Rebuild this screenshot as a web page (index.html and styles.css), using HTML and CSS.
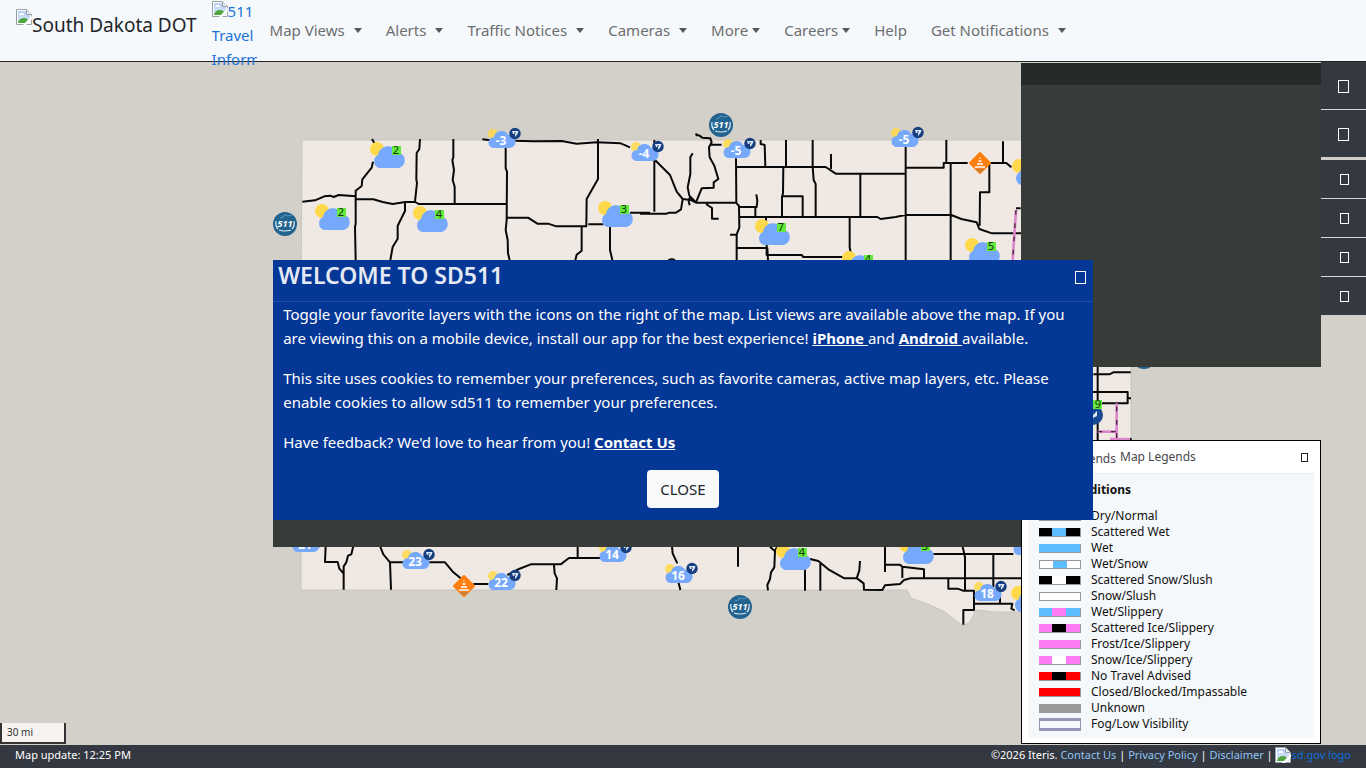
FILE: index.html
```html
<!DOCTYPE html>
<html lang="en">
<head>
<meta charset="utf-8">
<title>SD511</title>
<meta name="viewport" content="width=device-width, initial-scale=1">
<link rel="stylesheet" href="styles.css">
</head>
<body>
<svg class="defs" aria-hidden="true">
  <defs>
    <linearGradient id="pic-sky" x1="0" y1="0" x2="0" y2="1"><stop offset="0" stop-color="#b5cdf5"/><stop offset="1" stop-color="#dce8fb"/></linearGradient>
    <symbol id="broken" viewBox="0 0 16 16">
      <path d="M.5.5h10l5 5v10H.5z" fill="#fff" stroke="#9aa0a8"/>
      <path d="M2 2h8v4h4v8H2z" fill="url(#pic-sky)"/>
      <path d="M3 6q0-2 2-2 2-1 3 1 1 1-1 1z" fill="#fff"/>
      <path d="M2 14q1-5 6-5 3 0 4 2l-3 3z" fill="#4ea63b"/>
      <path d="M16 7v3l-6 6H7z" fill="#fff"/>
      <path d="M10.500.5v5h5" fill="#e8ebef" stroke="#9aa0a8"/>
    </symbol>
    <g id="cloud">
      <circle cx="7" cy="6" r="7" fill="#ffd94a"/>
      <path d="M9 25a7 7 0 0 1-1-13 10 10 0 0 1 19-3 8 8 0 0 1 3 1 8 8 0 0 1-1 15z" fill="#76a9fb"/>
    </g>
    <g id="station">
      <circle cx="6" cy="6" r="5" fill="#ffd94a" opacity=".85"/>
      <path d="M7 20a5.500 5.500 0 0 1 0-11 7.500 7.500 0 0 1 14-2 6.500 6.500 0 0 1 2 13z" fill="#76a9fb"/>
      <circle cx="28" cy="5.500" r="5.700" fill="#173f80"/>
      <path d="M25 3h6.500l-1 3-2.500 3v-3h-2z" fill="#dbe6f7"/>
      <path d="M27 5h2" stroke="#173f80"/>
    </g>
    <g id="camera511">
      <circle r="12" fill="#23638f"/>
      <path d="M-9-3a9.500 9.500 0 0 0 2 8M9-3a9.500 9.500 0 0 1-2 8M-6 6q6 2 12 0" fill="none" stroke="#dcebf4" stroke-width="1.200"/>
      <path d="M-5-6l3-1 2-2 3 1 4-1" fill="none" stroke="#4f91bd" stroke-width="1.200"/>
      <text class="shield-text" y="3" text-anchor="middle">511</text>
    </g>
    <g id="work">
      <path d="M0-10 10 0 0 10-10 0z" fill="#ff7f0e" stroke="#ff7f0e" stroke-width="2" stroke-linejoin="round"/>
      <path d="M-5 6h10L0 10z" fill="#c98136"/>
      <path d="M-5 4h10M-3 1h6M-1.500-2h3M-.5-5h1" stroke="#fff" stroke-width="1.700"/>
    </g>
  </defs>
</svg>

<header class="navbar">
  <a class="brand" href="#"><svg class="broken"><use href="#broken"/></svg>South Dakota DOT</a>
  <a class="logo511" href="#"><svg class="broken"><use href="#broken"/></svg>511<br>Travel<br>Information</a>
  <nav class="menu">
    <a class="drop spaced" href="#">Map Views</a>
    <a class="drop spaced" href="#">Alerts</a>
    <a class="drop spaced" href="#">Traffic Notices</a>
    <a class="drop spaced" href="#">Cameras</a>
    <a class="drop" href="#">More</a>
    <a class="drop" href="#">Careers</a>
    <a href="#">Help</a>
    <a class="drop spaced" href="#">Get Notifications</a>
  </nav>
</header>

<main class="map-area">
  <svg class="map" viewBox="0 62 1366 683" preserveAspectRatio="xMidYMid slice" role="img" aria-label="Road conditions map">
    <path class="land" d="M302 140H1131V612H1021L995 612 976 610 970 622 963 626 945 612 930 605 911 598 907 590H301V300z"/>
    <g class="roads" transform="translate(270 110) scale(.33333)">
      <path d="M306 87l7 12M309 155l-4 18-28 35-2 20-18 14v100l-2 8 2 100M97 275l38-4 28-12 18-2 10 4 15-6 52 4M258 268h52l28 8 30 6 38-6h30l10 6h262M450 87l-2 30-8 12-1 80 2 10-6 55M550 87v55l-3 8 5 30-4 30 6 20v50M637 88l25 3M730 92l60 2 85-1 45 8 60-4 72 3 28 12M707 110v65l4 10-1 145-3 30 6 30 1 40 5 20M984 87v120l-34 60-1 82h-90l-25-8h-32l-28-18h-65M935 350v72l-15 12-4 16M955 343h45M1020 350v70l7 30M1080 308h60M405 275v28l-15 30-7 15v38l-15 25-7 39"/>
    </g>
    <g class="roads" transform="translate(640 110) scale(.33333)">
      <path d="M43 90v215M45 150l45 45 20 50 18 22 25 3 15 8M128 268l-5 30-15 10h-20l-8 3H0M158 130l-7 12v50l-8 40 5 25 20 20 17-42 36-2v-16l14-10-12-40-14-25-2-30 8-15-4-12-24-2-10-7h-7l-2-6M150 262l-4 12 3 12M213 104h32M168 278h120l9 10 1 65-8 20v77M198 282l18 12v32h20M288 145l1 132M290 171h267l30 20h210M362 90v12l12 3 2 64M438 90v80M518 90v80l3 40 6 12v96M430 172l-1 78-3 10v60M428 259h60v60M349 253l3 20-2 18h-50M346 292v28M300 321h412l10 6 45-6 32-7M573 132v45M661 193v127M797 110v340M800 173h111v-14h72M919 90v68M1089 94v64l-40 1h50l15 13M932 160v290M800 315h134l30 12 46 10 8 20 38 13h90M1048 160v87h-28l-1 100M1142 295h-14M378 320v20M270 374h20M292 414h90l2 36M380 405v30h105l5 6h120M629 322v90l4 20M85 451q10-6 20 0"/>
      <path class="ice" d="M1128 300l-6 90-4 60"/><path class="ice-dash" d="M1128 300l-6 90-4 60"/>
    </g>
    <g class="roads" transform="translate(1010 360) scale(.33333)">
      <path d="M263 0v240M250 43h48l12-6h52M245 96h108v34h-80M353 115h10M300 237h65"/>
      <path class="ice" d="M320 130v110M263 215h57M300 237h60"/><path class="ice-dash" d="M320 140v100M263 215h57"/>
    </g>
    <g class="roads" transform="translate(270 510) scale(.33333)">
      <path d="M120 110h28M167 108l-2 48h38l5 20 13 15v48M250 108l-6 25-10 4-5 20-8 12v68M330 108l10 25 20 24 3 82M360 157h45M475 157h50l25 30 25 20M610 222h45M712 195l35-18 35-14h90l25-19h100M923 108v36M852 165l2 25 7 15-2 35"/>
    </g>
    <g class="roads" transform="translate(640 530) scale(.33333)">
      <path d="M96 50l2 20 14 30M115 155l6 25M294 50v60M390 50l15 14-2 48-10 15-3 20-8 18 2 16M411 50l-6 14M495 115v67M510 87l25 6 30 25 48 27h38l20 15 1 19 55 1 8-14 45-4 12-12 20-5h370M541 100v82M660 93l-2 28-8 24M735 50v76M735 104h45l7 6 65 8v26M787 110v34M880 72h240M968 50l7 32v100M1060 72v100M925 146v30h28l16 6h33v58h-32v44M1002 221h115l-3 15 10 5M1080 190v28"/>
    </g>

    <g class="temps">
      <g transform="translate(370 143)"><use href="#cloud"/><rect x="22" y="3" width="9" height="9"/><text x="26" y="11">2</text></g>
      <g transform="translate(315 205)"><use href="#cloud"/><rect x="22" y="3" width="9" height="9"/><text x="26" y="11">2</text></g>
      <g transform="translate(413 207)"><use href="#cloud"/><rect x="22" y="3" width="9" height="9"/><text x="26" y="11">4</text></g>
      <g transform="translate(598 202)"><use href="#cloud"/><rect x="22" y="3" width="9" height="9"/><text x="26" y="11">3</text></g>
      <g transform="translate(755 220)"><use href="#cloud"/><rect x="22" y="3" width="9" height="9"/><text x="26" y="11">7</text></g>
      <g transform="translate(965 239)"><use href="#cloud"/><rect x="22" y="3" width="9" height="9"/><text x="26" y="11">5</text></g>
      <g transform="translate(842 252)"><use href="#cloud"/><rect x="22" y="3" width="9" height="9"/><text x="26" y="11">4</text></g>
      <g transform="translate(776 545)"><use href="#cloud"/><rect x="22" y="3" width="9" height="9"/><text x="26" y="11">4</text></g>
      <g transform="translate(899 539)"><use href="#cloud"/><rect x="22" y="3" width="9" height="9"/><text x="26" y="11">3</text></g>
      <use href="#cloud" x="1012" y="160"/>
      <use href="#cloud" x="1011" y="587"/>
      <circle cx="1093" cy="415" r="10" fill="#174a92"/><path d="M1090 418l7-7v5l-4 2z" fill="#dbe6f7"/>
      <rect x="1093" y="400" width="9" height="9"/><text x="1098" y="408">9</text>
    </g>
    <g class="stations">
      <g transform="translate(487 128)"><use href="#station"/><text x="14" y="17">-3</text></g>
      <g transform="translate(630 141)"><use href="#station"/><text x="14" y="17">-4</text></g>
      <g transform="translate(722 138)"><use href="#station"/><text x="14" y="17">-5</text></g>
      <g transform="translate(890 127)"><use href="#station"/><text x="14" y="17">-5</text></g>
      <g transform="translate(401 549)"><use href="#station"/><text x="14" y="17">23</text></g>
      <g transform="translate(487 570)"><use href="#station"/><text x="14" y="17">22</text></g>
      <g transform="translate(598 542)"><use href="#station"/><text x="14" y="17">14</text></g>
      <g transform="translate(664 563)"><use href="#station"/><text x="14" y="17">16</text></g>
      <g transform="translate(973 581)"><use href="#station"/><text x="14" y="17">18</text></g>
      <g transform="translate(291 532)"><use href="#station"/><text x="14" y="17">21</text></g>
      <use href="#station" x="1012" y="535"/>
    </g>
    <use href="#camera511" x="285" y="224"/>
    <use href="#camera511" x="721" y="125"/>
    <use href="#camera511" x="740" y="607"/>
    <use href="#camera511" x="1144" y="357"/>
    <use href="#work" x="980" y="163"/>
    <use href="#work" x="464" y="586"/>
  </svg>

  <div class="scale">30 mi</div>
  <section class="side-panel" aria-label="Details"></section>
  <div class="modal-base"></div>

  <div class="tools">
    <div class="tool-group large">
      <button type="button" aria-label="Zoom in"><span class="glyph"></span></button>
      <button type="button" aria-label="Zoom out"><span class="glyph"></span></button>
    </div>
    <div class="tool-group">
      <button type="button" aria-label="Layers"><span class="glyph small"></span></button>
      <button type="button" aria-label="Cameras"><span class="glyph small"></span></button>
      <button type="button" aria-label="Locate"><span class="glyph small"></span></button>
      <button type="button" aria-label="Legend"><span class="glyph small"></span></button>
    </div>
  </div>

  <section class="legend" aria-label="Map Legends">
    <div class="legend-head">
      <span class="legend-alt"><svg class="broken"><use href="#broken"/></svg>Legends</span>
      <span class="legend-title">Map Legends</span>
      <button type="button" aria-label="Close legend"><span class="glyph tiny"></span></button>
    </div>
    <div class="legend-body">
      <h3>Road Conditions</h3>
      <ul>
        <li><i class="sw black"></i>Dry/Normal</li>
        <li><i class="sw black mid-blue"></i>Scattered Wet</li>
        <li><i class="sw blue"></i>Wet</li>
        <li><i class="sw white mid-blue"></i>Wet/Snow</li>
        <li><i class="sw black mid-white"></i>Scattered Snow/Slush</li>
        <li><i class="sw white"></i>Snow/Slush</li>
        <li><i class="sw blue mid-pink"></i>Wet/Slippery</li>
        <li><i class="sw pink mid-black"></i>Scattered Ice/Slippery</li>
        <li><i class="sw pink"></i>Frost/Ice/Slippery</li>
        <li><i class="sw pink mid-white"></i>Snow/Ice/Slippery</li>
        <li><i class="sw red mid-black"></i>No Travel Advised</li>
        <li><i class="sw red"></i>Closed/Blocked/Impassable</li>
        <li><i class="sw gray"></i>Unknown</li>
        <li><i class="sw fog"></i>Fog/Low Visibility</li>
      </ul>
    </div>
  </section>
</main>

<div class="modal" role="dialog" aria-labelledby="welcome-title">
  <div class="modal-head">
    <h2 id="welcome-title">WELCOME TO SD511</h2>
    <button type="button" aria-label="Close"><span class="glyph"></span></button>
  </div>
  <div class="modal-body">
    <p>Toggle your favorite layers with the icons on the right of the map. List views are available above the map. If you are viewing this on a mobile device, install our app for the best experience! <a href="#">iPhone </a> and <a href="#">Android </a> available.</p>
    <p>This site uses cookies to remember your preferences, such as favorite cameras, active map layers, etc. Please enable cookies to allow sd511 to remember your preferences.</p>
    <p>Have feedback? We'd love to hear from you! <a href="#">Contact Us</a></p>
    <button type="button" class="close-btn">CLOSE</button>
  </div>
</div>

<footer class="footer">
  <span>Map update: 12:25 PM</span>
  <span class="footer-links">©2026 Iteris. <a href="#">Contact Us</a> | <a href="#">Privacy Policy</a> | <a href="#">Disclaimer</a> | <a class="sdgov" href="#"><svg class="broken"><use href="#broken"/></svg>sd.gov logo</a></span>
</footer>
</body>
</html>
```

FILE: styles.css
```css
* { box-sizing: border-box; }

body {
  margin: 0;
  height: 100vh;
  display: flex;
  flex-direction: column;
  overflow: hidden;
  font: 15px/24px "Segoe UI", "Noto Sans", sans-serif;
  color: #212529;
}

button { font: inherit; cursor: pointer; }
.defs { position: absolute; width: 0; height: 0; }
.broken { width: 16px; height: 16px; }

/* Navigation bar */
.navbar {
  position: relative;
  z-index: 2;
  flex: none;
  height: 62px;
  display: flex;
  align-items: flex-start;
  padding-left: 16px;
  background: #f6f9fc;
  border-bottom: 1px solid #212529;
}
.navbar a { text-decoration: none; white-space: nowrap; }
.brand {
  display: flex;
  margin-right: 15px;
  padding-top: 9px;
  color: #212529;
  font-size: 19px;
  line-height: 32px;
}
.logo511 {
  width: 45px;
  height: 66px;
  margin: -1px 13px 0 0;
  overflow: hidden;
  color: #1a73d9;
}
.logo511 .broken { vertical-align: 0; }
.menu { display: flex; gap: 24px; padding-top: 18px; }
.menu a { color: #6c6e70; }
.drop::after {
  content: "";
  display: inline-block;
  margin-left: 4px;
  vertical-align: 3px;
  border: 4px solid transparent;
  border-top: 5px solid #55585b;
  border-bottom: 0;
}
.spaced::after { margin-left: 9px; }

/* Map */
.map-area { position: relative; flex: 1; min-height: 0; background: #d3d0ca; }
.map { display: block; width: 100%; height: 100%; }
.land { fill: #f0e9e3; stroke: #c8c4be; }
.roads path { fill: none; stroke: #080808; stroke-width: 6; stroke-linejoin: round; }
.roads .ice { stroke: #dc86cc; stroke-width: 8; }
.roads .ice-dash { stroke: #4a2540; stroke-width: 4; stroke-dasharray: 14 26; }
.shield-text { font: italic 700 9px "Noto Sans", sans-serif; fill: #fff; }
.temps rect { fill: #63ea3c; }
.temps text { font: 11px "Noto Sans", sans-serif; fill: #10300c; text-anchor: middle; }
.stations text { font: 700 12px "Noto Sans", sans-serif; fill: #fff; text-anchor: middle; }

.scale {
  position: absolute;
  left: 0;
  bottom: 1px;
  width: 66px;
  height: 21px;
  padding-left: 5px;
  border: 2px solid #333;
  border-top: 0;
  background: #f5f2f0;
  font-size: 10px;
  line-height: 19px;
  color: #333;
}
.side-panel {
  position: absolute;
  top: 1px;
  right: 45px;
  width: 300px;
  height: 304px;
  background: #373c39;
  border-top: 22px solid #262b29;
}

.tools {
  position: absolute;
  top: 0;
  right: 0;
  width: 45px;
  display: grid;
  gap: 3px;
}
.tool-group { display: grid; gap: 1px; background: #d3d6d8; }
.tools button {
  height: 38px;
  padding: 0 0 2px;
  border: 0;
  background: #343840;
  color: #fff;
}
.tools .large button { height: 47px; }
.glyph {
  display: inline-block;
  width: 11px;
  height: 13px;
  border: 1px solid;
  vertical-align: middle;
}
.glyph.small { width: 9px; height: 11px; margin-left: 2px; }
.glyph.tiny { width: 7px; height: 9px; }

/* Legend */
.legend {
  position: absolute;
  right: 45px;
  bottom: 1px;
  width: 300px;
  height: 304px;
  padding: 0 6px 6px;
  border: 1px solid #000;
  background: #fff;
  font-size: 12px;
  line-height: 16px;
}
.legend-head { display: flex; align-items: center; height: 32px; color: #45484b; }
.legend-alt { display: flex; gap: 2px; width: 88px; padding-top: 3px; justify-content: flex-end; }
.legend-title { margin-left: 4px; }
.legend-head button {
  margin-left: auto;
  padding: 0 6px;
  border: 0;
  background: none;
  color: #222;
  line-height: 16px;
}
.legend-body { height: 265px; padding: 8px 11px; border-top: 1px solid #e9ecee; background: #f5f8fb; color: #111; }
.legend h3 { margin: 0 0 10px; width: 92px; display: flex; justify-content: flex-end; white-space: nowrap; font-size: 12px; line-height: 16px; }
.legend ul { margin: 0; padding: 0; list-style: none; }
.legend li { display: flex; align-items: center; gap: 10px; }
.sw {
  width: 42px;
  height: 9px;
  border: solid #999;
  border-width: 0 1px 1px 0;
  --mid: transparent;
  background-image: linear-gradient(var(--mid), var(--mid));
  background-size: 14px 100%;
  background-position: 13px 0;
  background-repeat: no-repeat;
}
.black { background-color: #000; }
.white { background-color: #fff; border-width: 1px; }
.blue { background-color: #5cbdff; }
.pink { background-color: #ff7af5; }
.red { background-color: #f00; }
.gray { background-color: #999; }
.fog { height: 13px; background-color: #f5f8fd; border: solid #9494b8; border-width: 3px 1px; }
.mid-blue { --mid: #5cbdff; }
.mid-white { --mid: #fff; }
.mid-pink { --mid: #ff7af5; }
.mid-black { --mid: #000; }

/* Welcome dialog */
.modal-base {
  position: absolute;
  top: 198px;
  left: 20%;
  width: 60%;
  height: 287px;
  background: #373c39;
}
.modal {
  position: absolute;
  z-index: 3;
  top: 260px;
  left: 20%;
  width: 60%;
  background: #053796;
  color: #fff;
}
.modal-head {
  display: flex;
  justify-content: space-between;
  height: 42px;
  padding: 0 7px 0 5px;
  border-bottom: 1px solid #1f4da3;
}
.modal-head h2 { margin: 0; font-size: 23px; font-weight: 600; line-height: 31px; color: #e4e9f3; }
.modal-head button { height: 34px; padding: 0 0 2px; border: 0; background: none; color: #fff; }
.modal-body { padding: 0 10px 12px; }
.modal-body p { margin: 0 0 16px; }
.modal-body a { color: #fff; font-weight: 700; }
.close-btn {
  display: block;
  height: 38px;
  margin: 0 auto;
  padding: 0 13px;
  border: 0;
  border-radius: 4px;
  background: #f8f9fa;
  color: #212529;
}

/* Footer */
.footer {
  flex: none;
  height: 23px;
  display: flex;
  justify-content: space-between;
  padding: 0 15px;
  background: #343840;
  color: #fff;
  font-size: 11px;
  line-height: 20px;
}
.footer a { color: #8ec5f7; text-decoration: none; }
.footer .broken { vertical-align: -4px; }
.footer .sdgov { color: #0f6fdc; }
```
